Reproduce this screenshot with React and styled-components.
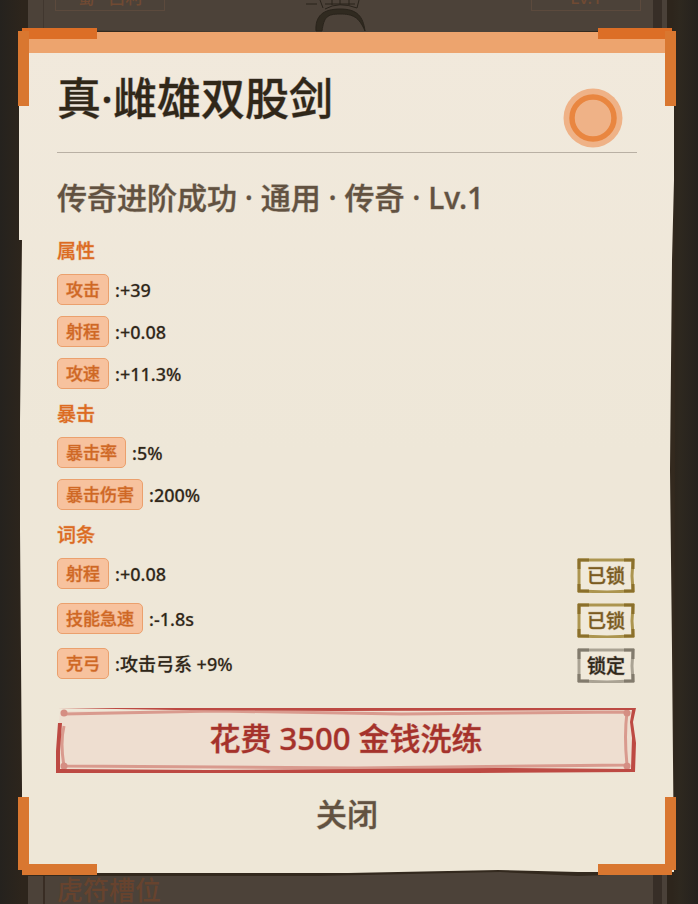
import React from "react";
import styled, { createGlobalStyle, css } from "styled-components";

const Global = createGlobalStyle`
  *, *::before, *::after { box-sizing: border-box; }
  body {
    margin: 0;
    background: #29231d;
    color: #302719;
    font-family: "Noto Sans", "Noto Sans CJK SC Medium", "Noto Sans CJK SC", sans-serif;
    font-weight: 500;
  }
  button { font: inherit; cursor: pointer; }
  h1, h2, p { margin: 0; }
`;

const inked = css`
  font-weight: 500;
  -webkit-text-stroke: 1px color-mix(in srgb, currentColor 40%, transparent);
`;

const Stage = styled.div`
  position: relative;
  min-height: 100vh;
  padding: 30px 22px;
  overflow: hidden;
  background: linear-gradient(90deg, #25221e 0, #2d251c 22px, #2d251c calc(100% - 26px), #2e281f calc(100% - 18px), #25211e 100%);
`;

const Backdrop = styled.div`
  position: absolute;
  inset: 0 31px 0 28px;
  display: flex;
  flex-direction: column;
  justify-content: space-between;
  border-right: 5px solid #4a4139;
  background: #4c4239;
  box-shadow: inset -9px 0 0 #372e27;
`;

const BackdropTop = styled.div`
  display: flex;
  justify-content: space-between;
  height: 31px;
  padding: 0 11px;
  margin: 0 10px 0 15px;
  border-left: 1px solid #41372f;
`;

const Chip = styled.div`
  width: 110px;
  height: 11px;
  border: 1px solid #5c4a3d;
  border-top: 0;
  color: #704a33;
  font-size: 17px;
  text-align: center;
`;

const ChipText = styled.span`
  display: block;
  margin-top: -9px;
  line-height: 14px;
`;

const Portrait = styled.svg`
  width: 70px;
  height: 32px;
  margin-right: 16px;
`;

const BackdropBottom = styled.div`
  height: 31px;
  margin-left: 15px;
  padding: 3px 0 0 12px;
  border-left: 2px solid #392d24;
  color: #67432e;
  font-size: 26px;
  line-height: 28px;
`;

const Panel = styled.section`
  position: relative;
  display: flex;
  flex-direction: column;
  min-height: 844px;
  padding: 0 39px 31px 35px;
`;

const PanelArt = styled.svg`
  position: absolute;
  top: 0;
  left: -4px;
  width: calc(100% + 4px);
  height: 100%;
  overflow: visible;
`;

const Ribbon = styled.div`
  position: absolute;
  top: 2px;
  left: 0;
  right: 0;
  height: 21px;
  background: #eda46e;
`;

const Corner = styled.i`
  position: absolute;
  ${(p) => (p.$bottom ? "bottom: -1px;" : "top: -2px;")}
  ${(p) => (p.$right ? "right: 0;" : "left: -4px;")}
  width: ${(p) => (p.$right ? 78 : 79)}px;
  height: 78px;
  &::before, &::after {
    content: "";
    position: absolute;
    background: #d97730;
  }
  &::before {
    ${(p) => (p.$bottom ? "bottom: 0;" : "top: 0;")}
    ${(p) => (p.$right ? "left: 0; right: 4px;" : "right: 0; left: 4px;")}
    height: 11px;
    background: ${(p) => (p.$bottom ? "#d97730" : "#dc6e26")};
  }
  &::after {
    ${(p) => (p.$bottom ? "top: 0; bottom: 5px;" : "top: 3px; bottom: 0;")}
    ${(p) => (p.$right ? "right: 0;" : "left: 0;")}
    width: 11px;
  }
`;

const Header = styled.header`
  position: relative;
  display: flex;
  justify-content: space-between;
  height: 123px;
  padding: 36px 14px 0 0;
  border-bottom: 1px solid #b9b0a4;
`;

const Title = styled.h1`
  ${inked}
  font-size: 44px;
  line-height: 64px;
`;

const Seal = styled.svg`
  width: 60px;
  height: 60px;
  margin-top: 22px;
`;

const Subtitle = styled.p`
  ${inked}
  position: relative;
  margin: 23px 0 18px;
  color: #625241;
  font-size: 30px;
  line-height: 44px;
`;

const Section = styled.section`
  position: relative;
  margin-bottom: 12px;
`;

const SectionTitle = styled.h2`
  ${inked}
  margin-bottom: 10px;
  color: #dc6b22;
  font-size: 19px;
  line-height: 26px;
`;

const List = styled.div`
  display: grid;
  gap: ${(p) => (p.$lockable ? 10 : 11)}px;
`;

const Row = styled.div`
  display: flex;
  align-items: flex-start;
  justify-content: space-between;
`;

const Stat = styled.div`
  ${inked}
  display: flex;
  align-items: center;
  gap: 6px;
`;

const Tag = styled.span`
  height: 31px;
  padding: 0 8px;
  border: 1px solid #eba06d;
  border-radius: 5px;
  background: #f7c29e;
  color: #cf6825;
  font-size: 17px;
  line-height: 30px;
`;

const Value = styled.span`
  height: 31px;
  font-size: 18px;
  line-height: 32px;
  -webkit-text-stroke-color: color-mix(in srgb, currentColor 20%, transparent);
`;

const LockButton = styled.button`
  ${inked}
  position: relative;
  width: 58px;
  height: 35px;
  margin-right: 2px;
  padding: 1px 0 0;
  border: 0;
  background: #f0e9da;
  color: ${(p) => (p.$locked ? "#7a5b21" : "#302719")};
  font-size: 19px;
  line-height: 34px;
`;

const ButtonArt = styled.svg`
  position: absolute;
  inset: 0;
  width: 100%;
  height: 100%;
`;

const ButtonText = styled.span`
  position: relative;
`;

const RerollButton = styled.button`
  ${inked}
  position: relative;
  height: 65px;
  margin: 13px 1px 0 -1px;
  padding: 0 0 6px;
  border: 0;
  background: transparent;
  color: #a5322b;
  font-size: 31px;
  line-height: 56px;
`;

const CloseButton = styled.button`
  ${inked}
  position: relative;
  align-self: center;
  margin-top: 13px;
  padding: 0 24px 1px;
  border: 0;
  background: transparent;
  color: #625241;
  font-size: 31px;
  line-height: 56px;
`;

const sections = [
  { title: "属性", stats: [["攻击", "+39"], ["射程", "+0.08"], ["攻速", "+11.3%"]] },
  { title: "暴击", stats: [["暴击率", "5%"], ["暴击伤害", "200%"]] },
  {
    title: "词条",
    lockable: true,
    stats: [["射程", "+0.08", true], ["技能急速", "-1.8s", true], ["克弓", "攻击弓系 +9%", false]],
  },
];

function Lock({ locked }) {
  const line = locked ? "#ac954f" : "#aaa394";
  const dark = locked ? "#8b702b" : "#827b6d";
  return (
    <LockButton type="button" $locked={locked} aria-pressed={locked}>
      <ButtonArt viewBox="0 0 58 35" aria-hidden="true" fill="none">
        <path d="M2 2H56L55 18 56 33 30 34 2 33Z" stroke={line} strokeWidth="3" />
        <path
          d="M1 2H12M47 2H57M56 1V11M56 26V34M57 33H47M12 33H1M2 34V26M2 11V1"
          stroke={dark}
          strokeWidth="3"
        />
      </ButtonArt>
      <ButtonText>{locked ? "已锁" : "锁定"}</ButtonText>
    </LockButton>
  );
}

export default function App() {
  return (
    <>
      <Global />
      <Stage>
        <Backdrop aria-hidden="true">
          <BackdropTop>
            <Chip><ChipText>蜀 · 吕利</ChipText></Chip>
            <Portrait viewBox="0 0 70 32" fill="none" stroke="#29231b">
              <path d="M11 31C10 16 18 9 35 9S58 16 60 31C54 17 48 14 35 14S19 17 17 31Z" fill="#302a20" />
              <path d="M18 8 15 0M20 9Q34 1 52 8L54 0M27 5V0M35 4V0M44 5V0M20 4H50M1 4H12" />
            </Portrait>
            <Chip><ChipText>Lv.1</ChipText></Chip>
          </BackdropTop>
          <BackdropBottom>虎符槽位</BackdropBottom>
        </Backdrop>
        <Panel role="dialog" aria-labelledby="item-title">
          <PanelArt viewBox="0 0 658 844" preserveAspectRatio="none" aria-hidden="true">
            <defs>
              <linearGradient id="paper" x1="0" y1="0" x2="0" y2="1">
                <stop offset="0" stopColor="#f1e9dc" />
                <stop offset=".5" stopColor="#eee7d8" />
                <stop offset="1" stopColor="#eee7d7" />
              </linearGradient>
            </defs>
            <path d="M3 0 220 2 420 3 656 0 657 400 656 843 560 846 482 842 300 846 4 846Z" fill="#33291e" />
            <path d="M1 2 220 2 360 3 656 2 656 150 654 230 652 440 654 620 656 842 560 842 480 840 330 843 4 843 4 760 2 500 2 390 4 210H1Z" fill="url(#paper)" />
          </PanelArt>
          <Ribbon />
          <Corner />
          <Corner $right />
          <Corner $bottom />
          <Corner $bottom $right />
          <Header>
            <Title id="item-title">真·雌雄双股剑</Title>
            <Seal viewBox="0 0 60 60" aria-hidden="true">
              <circle cx="30" cy="30" r="29.5" fill="#efb287" />
              <circle cx="30" cy="30" r="21" fill="none" stroke="#e98640" strokeWidth="5.5" />
            </Seal>
          </Header>
          <Subtitle>传奇进阶成功 · 通用 · 传奇 · Lv.1</Subtitle>
          {sections.map((s) => (
            <Section key={s.title}>
              <SectionTitle>{s.title}</SectionTitle>
              <List $lockable={s.lockable}>
                {s.stats.map(([name, value, locked]) => (
                  <Row key={name}>
                    <Stat>
                      <Tag>{name}</Tag>
                      <Value>:{value}</Value>
                    </Stat>
                    {s.lockable && <Lock locked={locked} />}
                  </Row>
                ))}
              </List>
            </Section>
          ))}
          <RerollButton type="button">
            <ButtonArt viewBox="0 0 580 65" preserveAspectRatio="none" aria-hidden="true">
              <path d="M4 3H576V62H3V15Z" fill="#eeded0" />
              <path
                d="M8 6 160 3 345 6 571 4Q568 28 571 57L300 60 8 58Q4 35 8 18"
                fill="none"
                stroke="#d99a8e"
                strokeWidth="3"
              />
              <g fill="#d58e83">
                <circle cx="8" cy="5" r="3.5" />
                <circle cx="571" cy="5" r="3.5" />
                <circle cx="8" cy="58" r="3.5" />
                <circle cx="571" cy="58" r="3.5" />
              </g>
              <path d="M1 0 280 0 580 0 577 14 580 35 579 64 420 65 150 65 0 65V43L2 15H6L4 43 4 61 150 62 440 60 575 61 576 30 574 14 576 2 280 3 120 2Z" fill="#bd4a43" />
            </ButtonArt>
            <ButtonText>花费 3500 金钱洗练</ButtonText>
          </RerollButton>
          <CloseButton type="button">关闭</CloseButton>
        </Panel>
      </Stage>
    </>
  );
}
